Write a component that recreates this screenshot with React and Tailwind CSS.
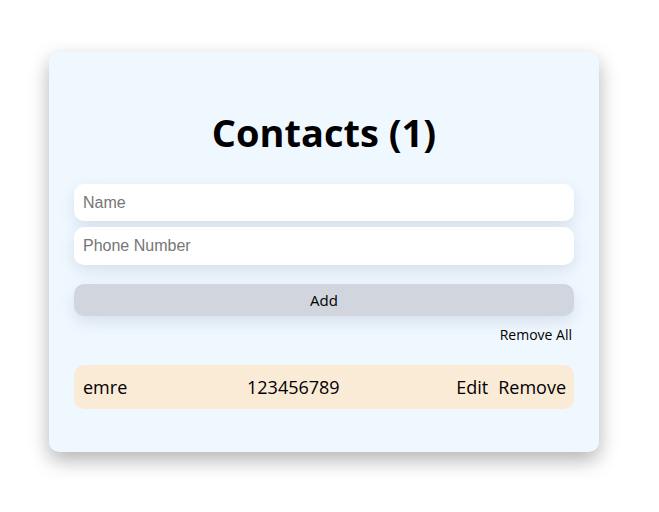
import { useState } from "react";

export default function App() {
  const [contacts] = useState([{ name: "emre", phone: "123456789" }]);

  return (
    <div className="flex min-h-[512px] w-full bg-white pl-[49px] pt-[52px] font-['Open_Sans',sans-serif]">
      <div className="h-[400px] w-[550px] rounded-[10px] bg-[#f0f8ff] px-[25px] pt-[56px] shadow-[0_8px_20px_rgba(0,0,0,0.3)]">
        <h1 className="text-center text-[38px] font-bold leading-[48px] text-black">
          Contacts ({contacts.length})
        </h1>

        <div className="mt-[28px] flex flex-col gap-[6px]">
          <input
            placeholder="Name"
            className="h-[37px] w-full rounded-[10px] bg-white px-[9px] font-['Liberation_Sans',sans-serif] text-[16px] shadow-[0_6px_16px_rgba(100,120,150,0.18)] outline-none placeholder:text-[#767676]"
          />
          <input
            placeholder="Phone Number"
            className="h-[38px] w-full rounded-[10px] bg-white px-[9px] font-['Liberation_Sans',sans-serif] text-[16px] shadow-[0_6px_16px_rgba(100,120,150,0.18)] outline-none placeholder:text-[#767676]"
          />
        </div>

        <button className="mt-[19px] h-[32px] w-full rounded-[10px] bg-[#d1d6de] text-[15px] text-black shadow-[0_6px_16px_rgba(100,120,150,0.18)]">
          Add
        </button>

        <div className="mt-[9px] flex justify-end pr-[2px]">
          <button className="text-[14px] leading-[20px] text-black">Remove All</button>
        </div>

        <ul className="mt-[20px]">
          {contacts.map((c) => (
            <li
              key={c.name}
              className="flex h-[44px] items-center rounded-[10px] bg-[#faebd7] pl-[9px] pr-[8px] text-[18px] text-black"
            >
              <span className="w-[164px]">{c.name}</span>
              <span className="flex-1">{c.phone}</span>
              <span className="flex gap-[10px]">
                <button>Edit</button>
                <button>Remove</button>
              </span>
            </li>
          ))}
        </ul>
      </div>
    </div>
  );
}
